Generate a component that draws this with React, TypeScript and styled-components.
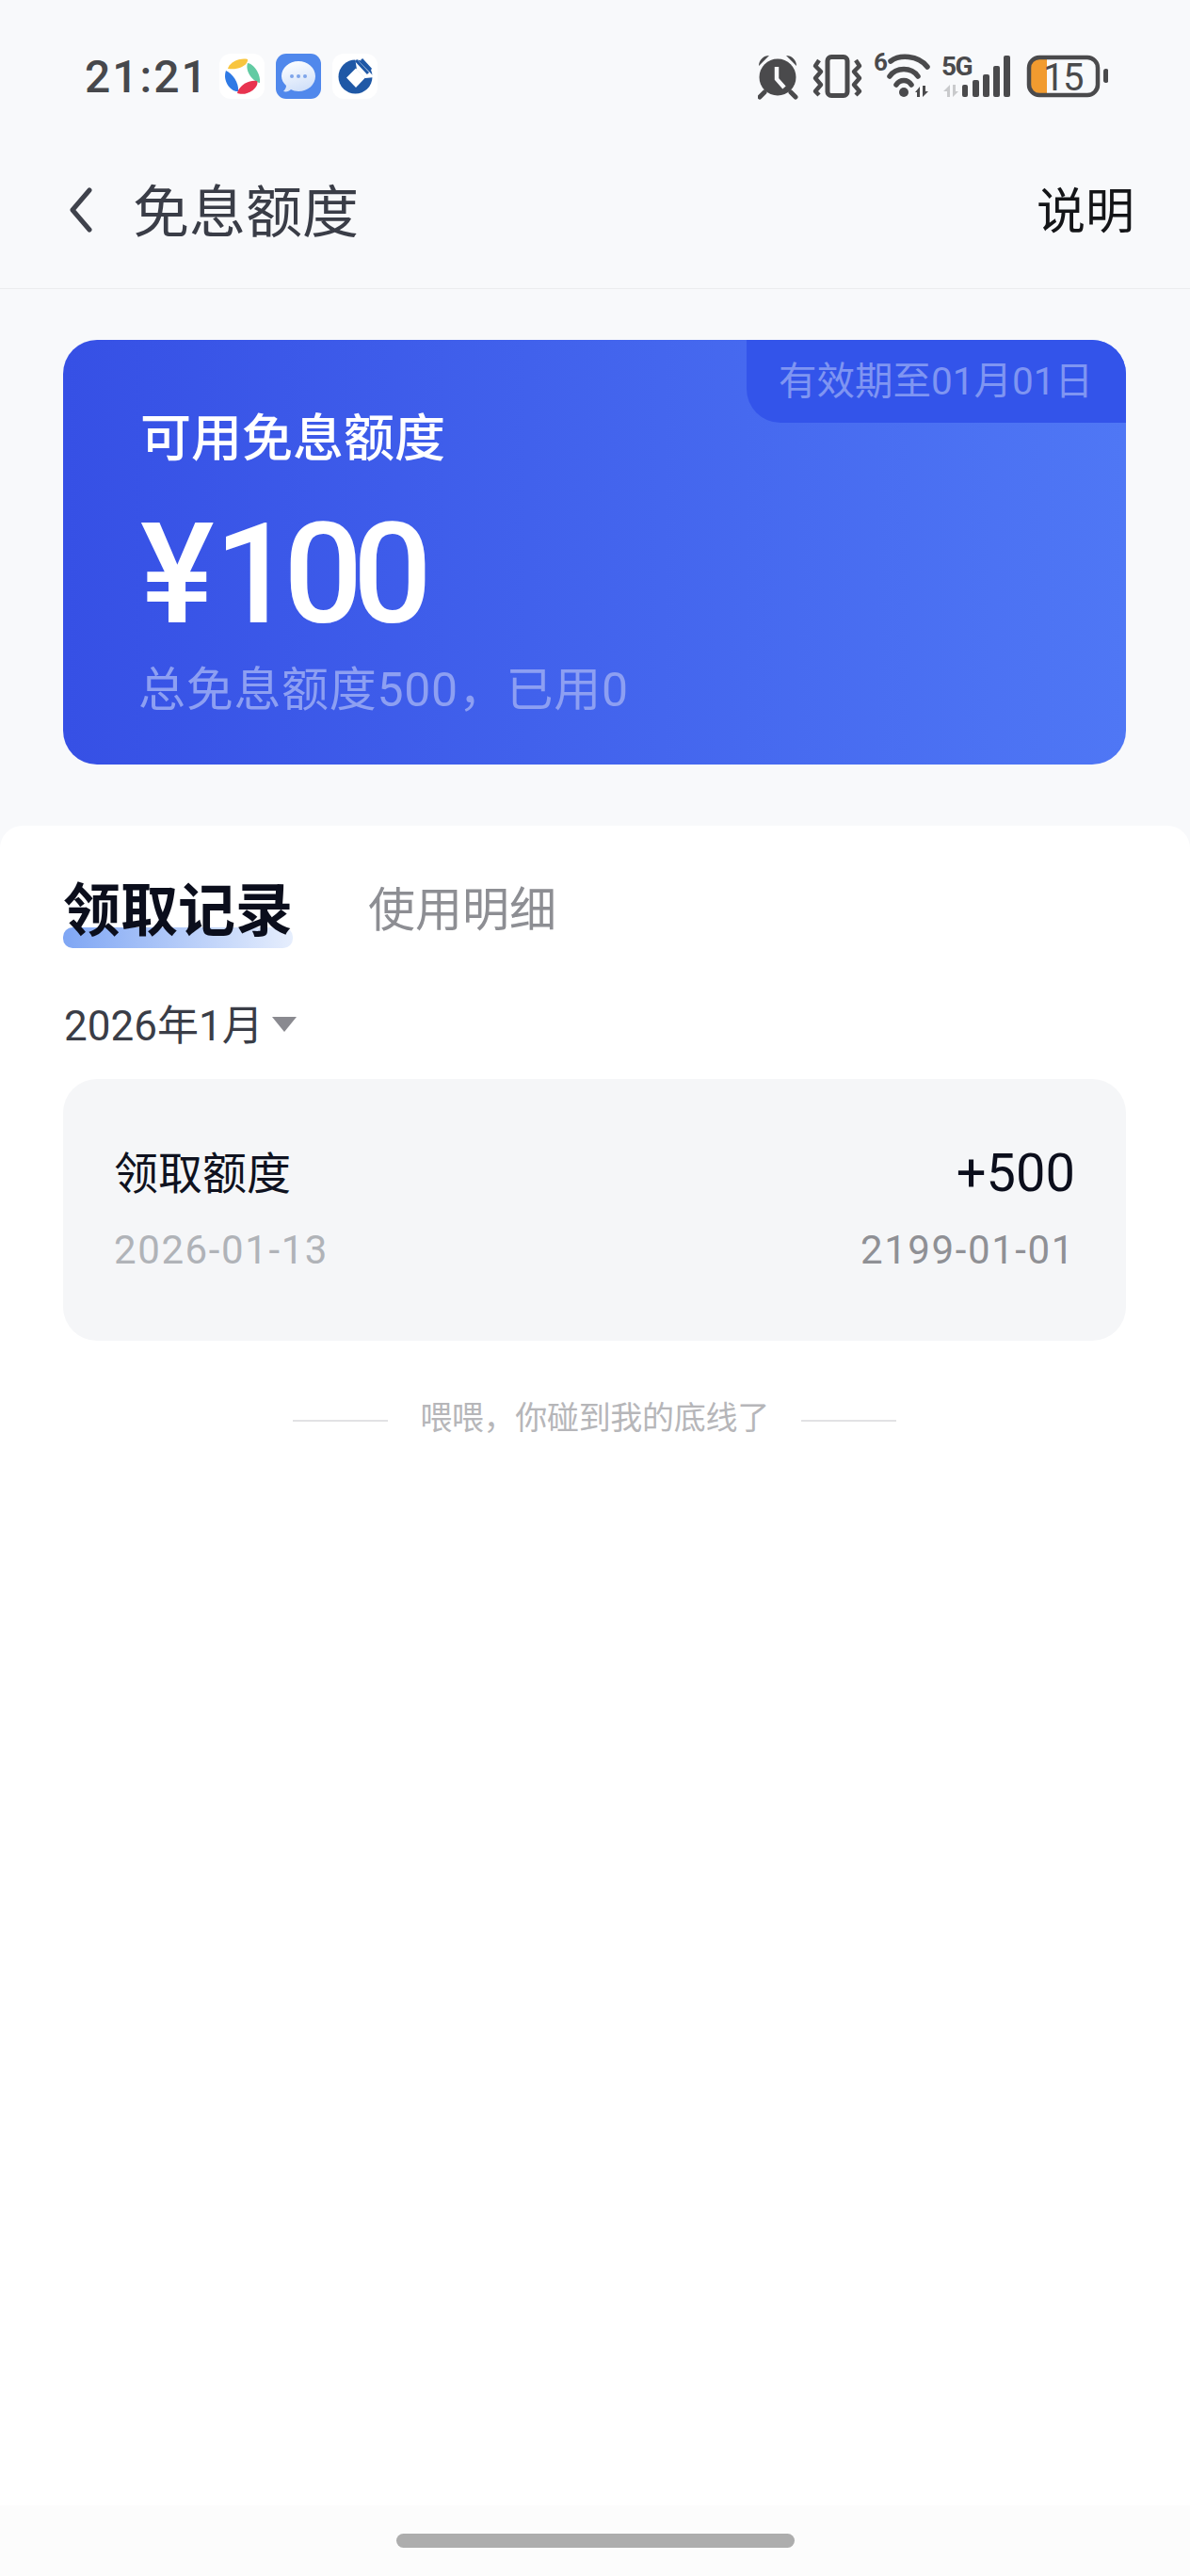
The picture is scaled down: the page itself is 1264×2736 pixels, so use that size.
import styled, { createGlobalStyle } from "styled-components";

const GlobalStyle = createGlobalStyle`
  html, body {
    margin: 0;
    padding: 0;
    background: #f8f9fb;
  }
  body {
    font-family: Roboto, "Noto Sans CJK SC", sans-serif;
  }
`;

const Page = styled.div`
  width: 1264px;
  height: 2736px;
  display: flex;
  flex-direction: column;
  background: #f8f9fb;
  overflow: hidden;
`;

const StatusBar = styled.div`
  height: 162px;
  display: flex;
  align-items: center;
  padding: 0 87px 0 90px;
  box-sizing: border-box;
`;

const Time = styled.span`
  width: 143px;
  font-size: 48px;
  font-weight: 500;
  letter-spacing: 2px;
  color: #47484c;
`;

const AppIcons = styled.div`
  display: flex;
  gap: 12px;
`;

const AppIcon = styled.svg`
  width: 48px;
  height: 48px;
  display: block;
`;

const StatusIcons = styled.div`
  margin-left: auto;
  display: flex;
  align-items: center;
`;

const NavBar = styled.header`
  height: 145px;
  display: flex;
  align-items: center;
  padding: 0 59px 28px 74px;
  box-sizing: border-box;
  border-bottom: 1px solid #ebecee;
`;

const BackIcon = styled.svg`
  width: 24px;
  height: 48px;
  margin: 6px 43px 0 0;
`;

const Title = styled.h1`
  margin: 0;
  font-size: 60px;
  font-weight: 400;
  color: #3a3d47;
`;

const NavAction = styled.span`
  margin-left: auto;
  font-size: 52px;
  color: #141518;
`;

const QuotaCard = styled.section`
  position: relative;
  margin: 54px 68px 0 67px;
  height: 451px;
  padding: 71px 82px 0;
  box-sizing: border-box;
  border-radius: 36px;
  overflow: hidden;
  background: linear-gradient(90deg, #3650e5, #4f77f5);
  color: #fff;
`;

const ExpiryBadge = styled.div`
  position: absolute;
  top: 0;
  right: 0;
  width: 403px;
  height: 88px;
  padding: 0 35px 8px 0;
  box-sizing: border-box;
  display: flex;
  align-items: center;
  justify-content: flex-end;
  background: #3354ea;
  border-bottom-left-radius: 36px;
  color: #7f95f2;
  font-size: 40.500px;
`;

const QuotaLabel = styled.div`
  font-size: 54px;
  font-weight: 500;
  line-height: 70px;
`;

const QuotaAmount = styled.div`
  margin-top: 39px;
  font-size: 148px;
  font-weight: 500;
  line-height: 140px;
  letter-spacing: -10.500px;
`;

const Currency = styled.span`
  letter-spacing: 0;
`;

const QuotaNote = styled.div`
  margin: 19px 0 0 -2px;
  font-size: 50px;
  line-height: 66px;
  letter-spacing: 0.7px;
  color: #8d9ff2;
`;

const Panel = styled.main`
  margin-top: 65px;
  flex: 1;
  padding: 0 68px 0 67px;
  background: #fff;
  border-radius: 24px 24px 0 0;
`;

const Tabs = styled.div`
  display: flex;
  align-items: center;
  gap: 80px;
  height: 170px;
`;

const Tab = styled.span<{ $active?: boolean }>`
  position: relative;
  z-index: 0;
  font-size: ${(props) => (props.$active ? "61px" : "50px")};
  font-weight: ${(props) => (props.$active ? 700 : 400)};
  color: ${(props) => (props.$active ? "#0b0e1c" : "#8d8e93")};
  ${(props) =>
    props.$active &&
    `
    &::before {
      content: "";
      position: absolute;
      z-index: -1;
      left: 0;
      right: 0;
      bottom: 0;
      height: 22px;
      border-radius: 10px;
      background: linear-gradient(90deg, #7fa6f4, #e6eefd);
    }
  `}
`;

const MonthPicker = styled.div`
  display: flex;
  align-items: center;
  gap: 8px;
  height: 78px;
  margin-bottom: 21px;
  font-size: 44px;
  color: #3a3d47;
  padding-left: 1px;
`;

const Caret = styled.svg`
  width: 28px;
  height: 18px;
  margin-top: 4px;
`;

const RecordCard = styled.article`
  height: 278px;
  padding: 0 54px;
  box-sizing: border-box;
  display: flex;
  flex-direction: column;
  justify-content: center;
  gap: 19px;
  border-radius: 36px;
  background: #f5f6f8;
`;

const RecordRow = styled.div`
  height: 66px;
  display: flex;
  justify-content: space-between;
  align-items: center;
`;

const RecordName = styled.span`
  font-size: 47px;
  color: #0f1220;
`;

const RecordAmount = styled.span`
  margin-top: 6px;
  font-size: 56px;
  color: #0b0e1c;
`;

const RecordDate = styled.span<{ $dark?: boolean }>`
  font-size: 42px;
  letter-spacing: 1.6px;
  color: ${(props) => (props.$dark ? "#8f9095" : "#b0b3b8")};
`;

const EndNote = styled.div`
  margin-top: 55px;
  display: flex;
  align-items: center;
  justify-content: center;
  gap: 34px;
  font-size: 34px;
  letter-spacing: -0.3px;
  color: #b6b6b9;
`;

const EndLine = styled.i`
  width: 101px;
  height: 2px;
  margin-top: 10px;
  background: #e2e2e4;
`;

const HomeArea = styled.footer`
  height: 75px;
  display: flex;
  justify-content: center;
  align-items: flex-start;
  padding-top: 30px;
  box-sizing: border-box;
  background: #fcfcfc;
`;

const HomeBar = styled.div`
  width: 423px;
  height: 15px;
  border-radius: 8px;
  background: #adadad;
`;

const grey = "#4a4a4c";

const StatusGlyphs = () => (
  <svg width="372" height="70" viewBox="805 46 372 70">
    {/* alarm */}
    <circle cx="826" cy="82" r="19.5" fill={grey} />
    <path d="M806 70a11 11 0 0 1 11-11zM835 59a11 11 0 0 1 11 11z" fill={grey} />
    <path d="M812 98l-5 5M840 98l5 5" stroke={grey} strokeWidth="5" strokeLinecap="round" />
    <path d="M825 71v13l8 9" fill="none" stroke="#f8f9fb" strokeWidth="4.5" />
    {/* vibrate */}
    <rect x="879" y="60.5" width="21" height="41" rx="4" fill="none" stroke={grey} strokeWidth="5" />
    <path
      d="M870 64l-4 6 6 6-6 7 6 7-6 7 4 4M909 64l4 6-6 6 6 7-6 7 6 7-4 4"
      fill="none"
      stroke={grey}
      strokeWidth="4.5"
      strokeLinejoin="round"
    />
    {/* wifi */}
    <text x="928" y="75" fontSize="26" fontWeight="700" fill={grey} fontFamily="Roboto">
      6
    </text>
    <path
      d="M946 65C955 58 975 58 985 71M945 81C952 71 968 71 975 81M952 90C956 84 964 84 968 90"
      fill="none"
      stroke={grey}
      strokeWidth="5.5"
      strokeLinecap="round"
    />
    <circle cx="960" cy="98" r="5" fill={grey} />
    <path d="M977 103V92l-5 6h2v5zM980 91v12l6-6h-3v-6z" fill={grey} />
    {/* signal */}
    <text x="1000" y="80" fontSize="28" fontWeight="700" fill={grey} fontFamily="Roboto" letterSpacing="-1.5">
      5G
    </text>
    <path d="M1009 103V90l-7 7h4v6zM1012 90v13l6-6h-3v-7z" fill="#c9cacc" />
    <rect x="1022" y="90" width="6" height="13" rx="2" fill={grey} />
    <rect x="1033" y="85" width="7" height="18" rx="2" fill={grey} />
    <rect x="1044" y="79" width="7" height="24" rx="2" fill={grey} />
    <rect x="1055" y="70" width="7" height="33" rx="2" fill={grey} />
    <rect x="1066" y="59" width="7" height="44" rx="2" fill={grey} />
    {/* battery */}
    <path d="M1112 62v37h-9a8 8 0 0 1-8-8V70a8 8 0 0 1 8-8z" fill="#f19b2f" />
    <rect x="1093" y="61" width="73" height="40" rx="11" fill="none" stroke={grey} strokeWidth="4.5" />
    <text x="1108" y="96" fontSize="40" fill={grey} fontFamily="Roboto" letterSpacing="-1.5">
      15
    </text>
    <rect x="1172" y="73" width="5.5" height="15" rx="2.7" fill={grey} />
  </svg>
);

const App = () => {
  return (
    <Page>
      <GlobalStyle />
      <StatusBar>
        <Time>21:21</Time>
        <AppIcons>
          <AppIcon viewBox="0 0 48 48">
            <rect width="48" height="48" rx="12" fill="#fff" />
            <path d="M9 16C11 9 22 4 30 6c1 5-8 12-21 10z" fill="#f8c53f" />
            <path d="M30 10c7 1 14 12 13 21-7-1-16-12-13-21z" fill="#62cba3" />
            <path d="M7 18c7 3 14 13 13 22-8 1-17-11-13-22z" fill="#2f7ae5" />
            <path d="M19 42c1-7 12-15 21-13 3 6-10 17-21 13z" fill="#e8334f" />
          </AppIcon>
          <AppIcon viewBox="0 0 48 48">
            <defs>
              <linearGradient id="bubble" x1="0.3" y1="0" x2="0.6" y2="1">
                <stop offset="0" stopColor="#fdfeff" />
                <stop offset="1" stopColor="#cfdff9" />
              </linearGradient>
            </defs>
            <rect width="48" height="48" rx="11" fill="#5088ec" />
            <path
              d="M24 8c10 0 18 7 18 16s-8 16-18 16c-3 0-6-1-8-2-2 2-5 3-8 2 2-2 3-4 3-6-3-3-5-6-5-10C6 15 14 8 24 8z"
              fill="url(#bubble)"
            />
            <circle cx="17" cy="24" r="2" fill="#7ea4ea" />
            <circle cx="24" cy="24" r="2" fill="#7ea4ea" />
            <circle cx="31" cy="24" r="2" fill="#7ea4ea" />
          </AppIcon>
          <AppIcon viewBox="0 0 48 48">
            <rect width="48" height="48" rx="12" fill="#fff" />
            <circle cx="24.5" cy="24.5" r="18" fill="#1f58a6" />
            <path d="M24 4l21 21-10 1-9-9z" fill="#fff" />
            <path d="M25 15.5l10 10-10 10.500-10-10.500z" fill="#fff" />
            <path d="M25 7l13 14M31 6l10 11" stroke="#1f58a6" strokeWidth="3" />
          </AppIcon>
        </AppIcons>
        <StatusIcons>
          <StatusGlyphs />
        </StatusIcons>
      </StatusBar>
      <NavBar>
        <BackIcon viewBox="0 0 24 48">
          <path d="M21 3L3 24l18 21" fill="none" stroke="#3f424c" strokeWidth="5" strokeLinecap="round" strokeLinejoin="round" />
        </BackIcon>
        <Title>免息额度</Title>
        <NavAction>说明</NavAction>
      </NavBar>
      <QuotaCard>
        <ExpiryBadge>有效期至01月01日</ExpiryBadge>
        <QuotaLabel>可用免息额度</QuotaLabel>
        <QuotaAmount>
          <Currency>¥</Currency>100
        </QuotaAmount>
        <QuotaNote>总免息额度500，已用0</QuotaNote>
      </QuotaCard>
      <Panel>
        <Tabs>
          <Tab $active>领取记录</Tab>
          <Tab>使用明细</Tab>
        </Tabs>
        <MonthPicker>
          2026年1月
          <Caret viewBox="0 0 28 18">
            <path d="M1 1h26L14 17z" fill="#8a8a90" />
          </Caret>
        </MonthPicker>
        <RecordCard>
          <RecordRow>
            <RecordName>领取额度</RecordName>
            <RecordAmount>+500</RecordAmount>
          </RecordRow>
          <RecordRow>
            <RecordDate>2026-01-13</RecordDate>
            <RecordDate $dark>2199-01-01</RecordDate>
          </RecordRow>
        </RecordCard>
        <EndNote>
          <EndLine />
          喂喂，你碰到我的底线了
          <EndLine />
        </EndNote>
      </Panel>
      <HomeArea>
        <HomeBar />
      </HomeArea>
    </Page>
  );
};

export default App;
